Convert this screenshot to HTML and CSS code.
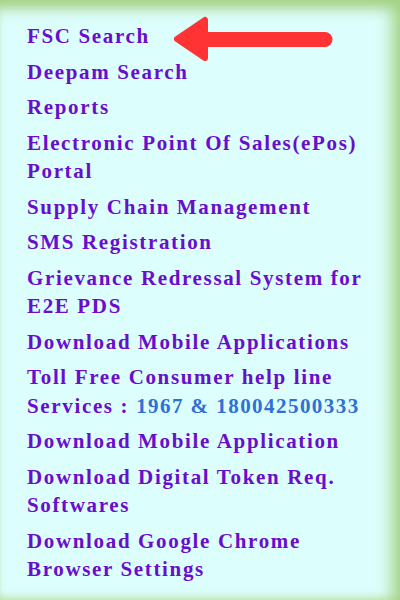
FILE: index.html
```html
<!DOCTYPE html>
<html>
<head>
<meta charset="utf-8">
<link rel="stylesheet" href="styles.css">
</head>
<body>
<div class="panel">
  <ul class="menu">
    <li>FSC Search</li>
    <li>Deepam Search</li>
    <li>Reports</li>
    <li>Electronic Point Of Sales(ePos) Portal</li>
    <li>Supply Chain Management</li>
    <li>SMS Registration</li>
    <li>Grievance Redressal System for E2E PDS</li>
    <li>Download Mobile Applications</li>
    <li>Toll Free Consumer help line Services : <span class="num">1967 &amp; 180042500333</span></li>
    <li>Download Mobile Application</li>
    <li>Download Digital Token Req. Softwares</li>
    <li>Download Google Chrome Browser Settings</li>
  </ul>
  <svg class="arrow" width="400" height="80" viewBox="0 0 400 80">
    <path d="M177 39 L205 20 L205 58 Z" fill="#ff3333" stroke="#ff3333" stroke-width="6" stroke-linejoin="round"/>
    <line x1="205" y1="39.5" x2="325" y2="39.5" stroke="#ff3333" stroke-width="15" stroke-linecap="round"/>
  </svg>
</div>
</body>
</html>
```
FILE: styles.css
```css
html, body {
  margin: 0;
  padding: 0;
}
body {
  width: 400px;
  height: 600px;
  overflow: hidden;
}
.panel {
  position: relative;
  width: 400px;
  height: 600px;
  box-sizing: border-box;
  background: #dcfefd;
  box-shadow: inset -14px 0 16px -6px #a6d486, inset 0 16px 14px -8px #a3cf7e, inset 0 -6px 8px -4px #c4e8b4;
  padding: 22px 25px 0 27px;
}
.menu {
  list-style: none;
  margin: 0;
  padding: 0;
  display: flex;
  flex-direction: column;
  gap: 7px;
  font-family: "Liberation Serif", "Times New Roman", serif;
  font-weight: bold;
  font-size: 21px;
  letter-spacing: 1.65px;
  line-height: 28.5px;
  color: #6a0dcc;
}
.num {
  color: #2f6fd6;
  letter-spacing: 1.45px;
}
.arrow {
  position: absolute;
  left: 0;
  top: 0;
}
```
